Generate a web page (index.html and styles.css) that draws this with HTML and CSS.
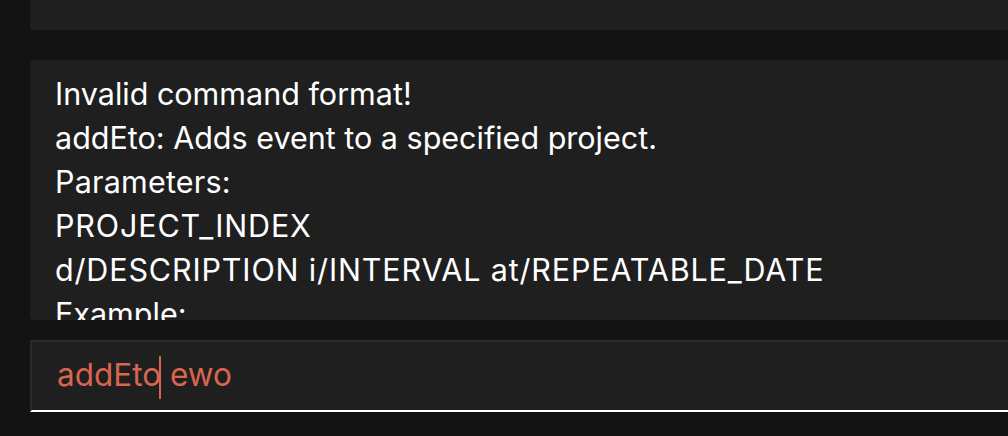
FILE: index.html
```html
<!DOCTYPE html>
<html>
<head>
<meta charset="utf-8">
<link rel="stylesheet" href="styles.css">
</head>
<body>
<div class="app">
  <div class="top-panel"></div>
  <div class="result-panel">
    <div class="result-text">
      <div>Invalid command format!</div>
      <div>addEto: Adds event to a specified project.</div>
      <div class="mixed">Parameters:</div>
      <div class="caps">PROJECT_INDEX</div>
      <div class="caps">d/DESCRIPTION i/INTERVAL at/REPEATABLE_DATE</div>
      <div>Example:</div>
    </div>
  </div>
  <div class="command-box">
    <span class="cmd-text">addEto<span class="caret"></span> ewo</span>
  </div>
</div>
</body>
</html>
```

FILE: styles.css
```css
html, body {
  margin: 0;
  padding: 0;
  background: #131313;
  width: 1008px;
  height: 436px;
  overflow: hidden;
}
.app {
  display: flex;
  flex-direction: column;
  padding-left: 30px;
  font-family: Inter, "Liberation Sans", sans-serif;
}
.top-panel {
  height: 30px;
  background: #1f1f1f;
  border-bottom-left-radius: 3px;
}
.result-panel {
  margin-top: 30px;
  height: 260px;
  background: #1f1f1f;
  border-radius: 4px 0 0 4px;
  overflow: hidden;
  box-sizing: border-box;
  padding: 12px 0 0 25px;
}
.result-text {
  color: #ffffff;
  font-size: 30.5px;
  line-height: 44px;
  white-space: nowrap;
}
.result-text .mixed {
  letter-spacing: 0.2px;
}
.result-text .caps {
  letter-spacing: 0.85px;
}
.command-box {
  margin-top: 20px;
  height: 72px;
  box-sizing: border-box;
  background: #1f1f1f;
  border-top: 2px solid #2a2a2a;
  border-left: 2px solid #2a2a2a;
  border-bottom: 2px solid #ffffff;
  padding: 11px 0 0 25px;
}
.cmd-text {
  position: relative;
  color: #d9654f;
  font-size: 31.5px;
  line-height: 44px;
  white-space: pre;
}
.caret {
  position: absolute;
  width: 2px;
  height: 43px;
  top: 1px;
  margin-left: -2px;
  background: #d9654f;
}
```
